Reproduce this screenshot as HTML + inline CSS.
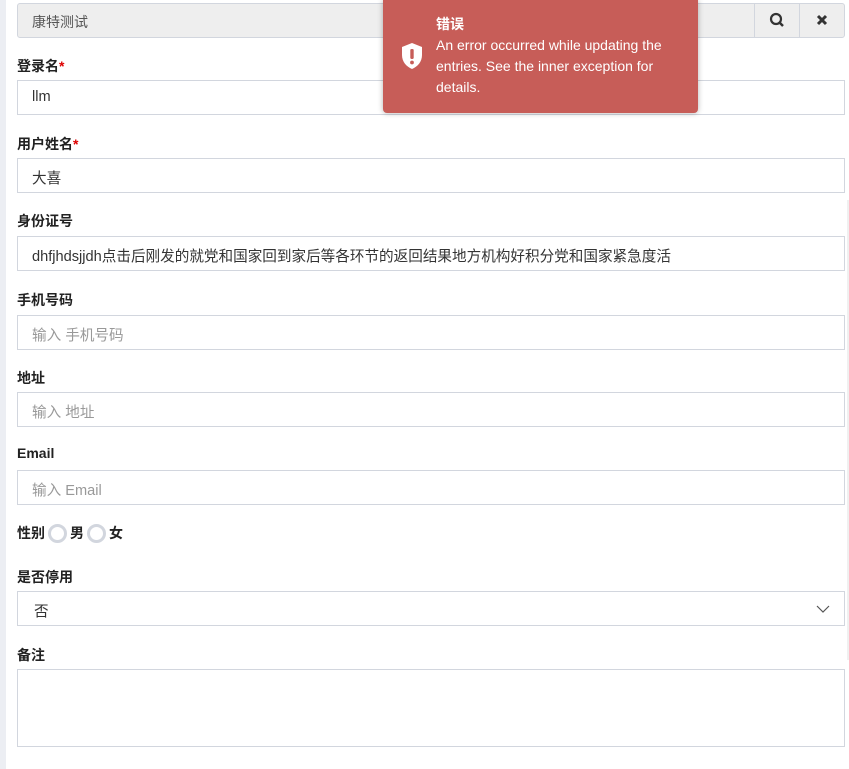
<!DOCTYPE html>
<html><head><meta charset="utf-8"><style>
*{box-sizing:border-box;margin:0;padding:0}
body{width:849px;height:769px;background:#fff;font-family:"Liberation Sans","Noto Sans CJK SC",sans-serif;position:relative;overflow:hidden;color:#333}
.lstrip{position:absolute;left:0;top:0;width:6px;height:769px;background:#eceef3}
.rstrip{position:absolute;left:847px;top:200px;width:2px;height:460px;background:#f0f0f0}
.top{position:absolute;left:17px;top:3px;width:828px;height:35px;background:#eee;border:1px solid #d2d6de;border-radius:3px}
.top span{position:absolute;left:14px;top:8px;font-size:14px;color:#555}
.btn{position:absolute;top:0;width:45px;height:33px;border-left:1px solid #d2d6de}
label{position:absolute;left:17px;font-size:14px;font-weight:bold;color:#222}
label i{color:#d00;font-style:normal}
.in{position:absolute;left:17px;width:828px;height:35px;border:1px solid #d2d6de;font-size:14.6px;padding:8px 14px;color:#333;white-space:nowrap}
.ph{color:#999}
.toast{position:absolute;left:383px;top:0;width:315px;height:113px;background:#c75d58;border-radius:0 0 4px 4px;box-shadow:0 0 6px rgba(0,0,0,.3);color:#fff}
.toast b{position:absolute;left:53px;top:14px;font-size:14px}
.toast p{position:absolute;left:53px;top:35px;font-size:14px;line-height:21px;width:250px}
.radio{display:inline-block;width:19px;height:19px;border:3px solid #d2d6de;border-radius:50%;vertical-align:-5px;margin:0 3px}
</style></head><body>
<div class="lstrip"></div><div class="rstrip"></div>
<div class="top"><span>康特测试</span>
<div class="btn" style="left:736px"><svg width="45" height="33"><circle cx="21" cy="15" r="5" fill="none" stroke="#333" stroke-width="2.2"/><line x1="24.5" y1="18.5" x2="28" y2="22" stroke="#333" stroke-width="2.5"/></svg></div>
<div class="btn" style="left:781px"><svg width="45" height="33"><path d="M18 12l8 8M26 12l-8 8" stroke="#333" stroke-width="3"/></svg></div>
</div>
<label style="top:56px">登录名<i>*</i></label>
<div class="in" style="top:80px">llm</div>
<label style="top:134px">用户姓名<i>*</i></label>
<div class="in" style="top:158px">大喜</div>
<label style="top:211px">身份证号</label>
<div class="in" style="top:236px">dhfjhdsjjdh点击后刚发的就党和国家回到家后等各环节的返回结果地方机构好积分党和国家紧急度活</div>
<label style="top:290px">手机号码</label>
<div class="in ph" style="top:315px">输入 手机号码</div>
<label style="top:368px">地址</label>
<div class="in ph" style="top:392px">输入 地址</div>
<label style="top:445px">Email</label>
<div class="in ph" style="top:470px">输入 Email</div>
<label style="top:523px">性别<span class="radio"></span>男<span class="radio"></span>女</label>
<label style="top:567px">是否停用</label>
<div class="in" style="top:591px;padding-left:16px">否<svg style="position:absolute;right:14px;top:12px" width="14" height="10"><path d="M1 2l6 6 6-6" fill="none" stroke="#555" stroke-width="1.2"/></svg></div>
<label style="top:645px">备注</label>
<div class="in" style="top:669px;height:78px"></div>
<div class="toast"><svg style="position:absolute;left:17px;top:42px" width="24" height="28" viewBox="0 0 24 28"><path d="M12 1L2 5v8c0 7 4.5 11.5 10 14 5.5-2.5 10-7 10-14V5z" fill="#fff"/><rect x="10.3" y="7" width="3.4" height="10" rx="1.2" fill="#c75d58"/><circle cx="12" cy="20.5" r="1.9" fill="#c75d58"/></svg>
<b>错误</b><p>An error occurred while updating the entries. See the inner exception for details.</p></div>
</body></html>
